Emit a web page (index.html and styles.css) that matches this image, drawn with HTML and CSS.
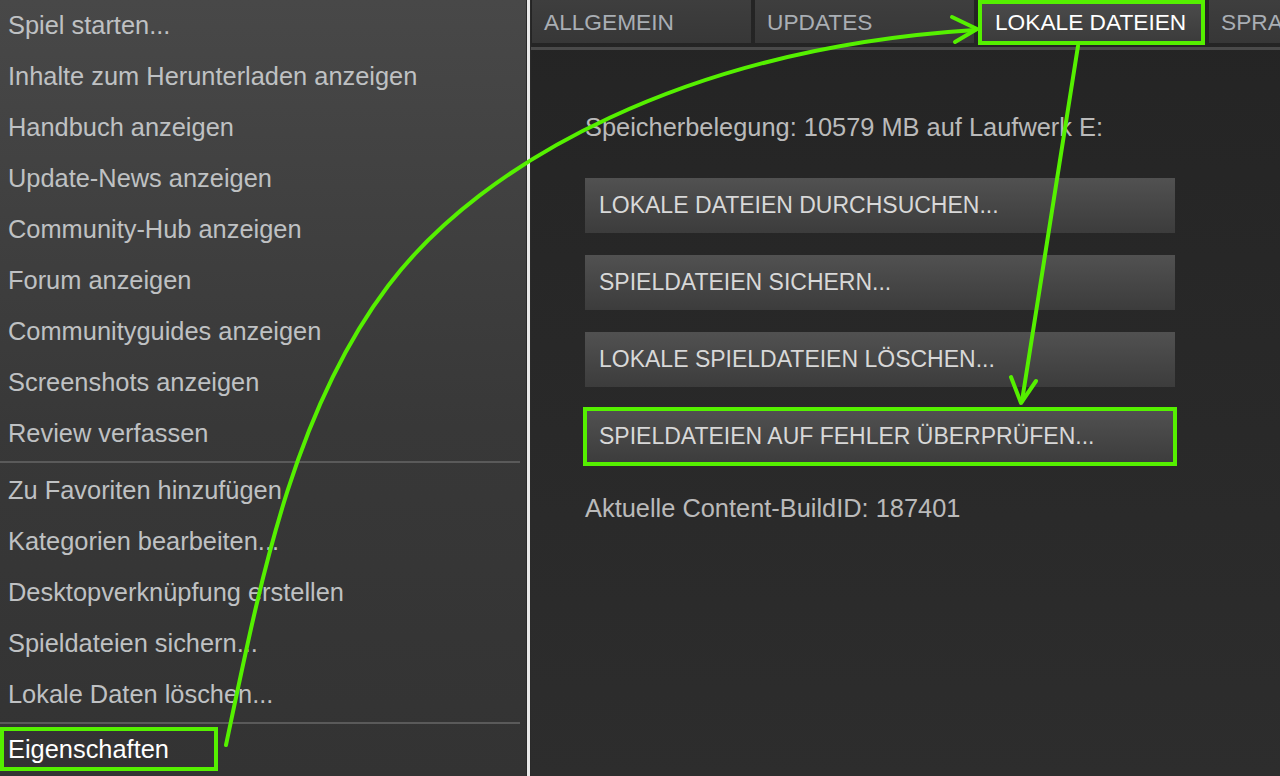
FILE: index.html
```html
<!DOCTYPE html>
<html lang="de">
<head>
    <meta charset="UTF-8">
    <meta name="viewport" content="width=device-width, initial-scale=1.0">
    <title>Eigenschaften - Lokale Dateien</title>
    <link rel="stylesheet" href="styles.css">
</head>
<body>

<div class="screen">
    <aside class="menu">
        <ul class="menu-list">
            <li>Spiel starten...</li>
            <li>Inhalte zum Herunterladen anzeigen</li>
            <li>Handbuch anzeigen</li>
            <li>Update-News anzeigen</li>
            <li>Community-Hub anzeigen</li>
            <li>Forum anzeigen</li>
            <li>Communityguides anzeigen</li>
            <li>Screenshots anzeigen</li>
            <li>Review verfassen</li>
        </ul>
        <div class="menu-sep"></div>
        <ul class="menu-list">
            <li>Zu Favoriten hinzufügen</li>
            <li>Kategorien bearbeiten...</li>
            <li>Desktopverknüpfung erstellen</li>
            <li>Spieldateien sichern...</li>
            <li>Lokale Daten löschen...</li>
        </ul>
        <div class="menu-sep"></div>
        <ul class="menu-list">
            <li class="marked">Eigenschaften</li>
        </ul>
    </aside>

    <div class="divider"></div>

    <main class="props">
        <nav class="tabs">
            <div class="tab">ALLGEMEIN</div>
            <div class="tab">UPDATES</div>
            <div class="tab active">LOKALE DATEIEN</div>
            <div class="tab last">SPRA</div>
        </nav>
        <div class="tab-line"></div>

        <section class="content">
            <p class="info">Speicherbelegung: 10579 MB auf Laufwerk E:</p>
            <div class="actions">
                <button class="action">LOKALE DATEIEN DURCHSUCHEN...</button>
                <button class="action">SPIELDATEIEN SICHERN...</button>
                <button class="action">LOKALE SPIELDATEIEN LÖSCHEN...</button>
                <button class="action marked">SPIELDATEIEN AUF FEHLER ÜBERPRÜFEN...</button>
            </div>
            <p class="info build">Aktuelle Content-BuildID: 187401</p>
        </section>
    </main>

    <!-- Markierungen -->
    <svg class="annotations" width="1280" height="776" viewBox="0 0 1280 776">
        <path d="M226,745 C261,579 293,412 388,286 C483,160 690,48 975,30" />
        <path d="M952,17 L977,29 L955,42" />
        <path d="M1078,46 L1022,401" />
        <path d="M1011,377 L1021,403 L1036,381" />
    </svg>
</div>

</body>
</html>
```

FILE: styles.css
```css
body {
    margin: 0;
    padding: 0;
    background-color: #262626;
    font-family: "Liberation Sans", Arial, sans-serif;
    overflow: hidden;
}

.screen {
    position: relative;
    display: flex;
    width: 1280px;
    height: 776px;
}

.menu {
    width: 526px;
    flex-shrink: 0;
    background: linear-gradient(#484848, #383838 55%, #333333);
}

.menu-list {
    list-style: none;
    margin: 0;
    padding: 0;
}

.menu-list li {
    height: 51px;
    line-height: 51px;
    padding-left: 8px;
    font-size: 25.4px;
    color: #bfc1c3;
    white-space: nowrap;
}

.menu-list li.marked {
    width: 210px;
    height: 44px;
    line-height: 44px;
    margin-top: 3px;
    color: #ffffff;
    box-shadow: inset 0 0 0 4px #55f000;
}

.menu-sep {
    width: 520px;
    height: 2px;
    margin: 2px 0;
    background-color: #5a5a5a;
}

.divider {
    width: 5px;
    flex-shrink: 0;
    background: linear-gradient(to right, #2a2a2a 0 1px, #e8e8e8 1px 4px, #2a2a2a 4px);
}

.props {
    flex: 1;
    min-width: 0;
    background: linear-gradient(#242424, #2d2d2d);
}

.tabs {
    display: flex;
    align-items: flex-start;
    gap: 4px;
    height: 45px;
    padding-left: 1px;
    overflow: hidden;
    white-space: nowrap;
}

.tab {
    flex-shrink: 0;
    box-sizing: border-box;
    width: 219px;
    height: 43px;
    padding-left: 12px;
    line-height: 44px;
    font-size: 22.7px;
    color: #a9aeb4;
    background: linear-gradient(#3e3e3e, #373737);
}

.tab.active {
    width: 227px;
    height: 45px;
    padding-left: 17px;
    color: #ffffff;
    background: linear-gradient(#4c4c4c, #3a3a3a);
    box-shadow: inset 0 0 0 4px #55f000;
}

.tab.last {
    flex: 1;
    width: auto;
}

.tab-line {
    height: 3px;
    margin-top: 2px;
    background-color: #4a4a4a;
}

.content {
    padding: 63px 0 0 54px;
}

.info {
    margin: 0;
    font-size: 25.4px;
    line-height: 29px;
    color: #bababa;
}

.actions {
    display: flex;
    flex-direction: column;
    gap: 22px;
    width: 590px;
    margin: 36px 0 30px;
}

.action {
    height: 55px;
    padding: 0 0 0 14px;
    border: none;
    text-align: left;
    font-family: "Liberation Sans", Arial, sans-serif;
    font-size: 23px;
    color: #d8d8d8;
    background: linear-gradient(#515151, #3c3c3c);
}

.action.marked {
    outline: 4px solid #55f000;
    outline-offset: -2px;
}

.annotations {
    position: absolute;
    top: 0;
    left: 0;
    pointer-events: none;
}

.annotations path {
    fill: none;
    stroke: #55f000;
    stroke-width: 4;
    stroke-linecap: round;
    stroke-linejoin: round;
}
```
